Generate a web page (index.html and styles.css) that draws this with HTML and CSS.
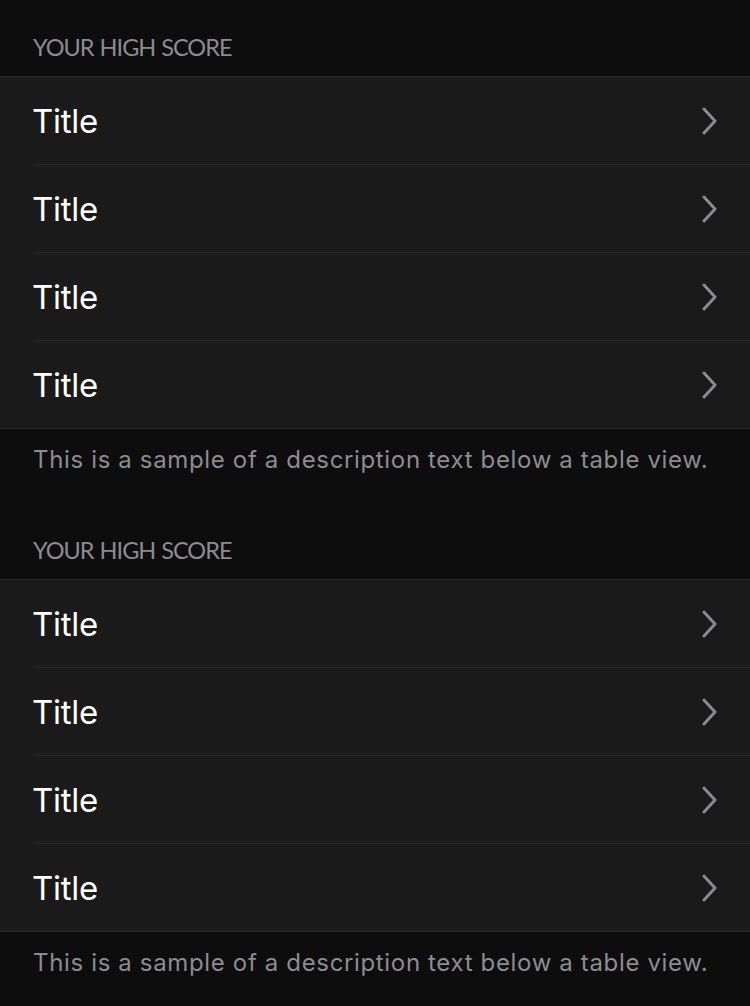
FILE: index.html
```html
<!DOCTYPE html>
<html>
<head>
<meta charset="utf-8">
<link rel="stylesheet" href="styles.css">
</head>
<body>
<div class="page">
  <section class="section">
    <div class="header"><span>YOUR HIGH SCORE</span></div>
    <div class="group">
      <div class="row"><span class="title">Title</span><svg class="chev" viewBox="0 0 16 28"><path d="M2 2 L13 14 L2 26"/></svg></div>
      <div class="row"><span class="title">Title</span><svg class="chev" viewBox="0 0 16 28"><path d="M2 2 L13 14 L2 26"/></svg></div>
      <div class="row"><span class="title">Title</span><svg class="chev" viewBox="0 0 16 28"><path d="M2 2 L13 14 L2 26"/></svg></div>
      <div class="row"><span class="title">Title</span><svg class="chev" viewBox="0 0 16 28"><path d="M2 2 L13 14 L2 26"/></svg></div>
    </div>
    <div class="footer">This is a sample of a description text below a table view.</div>
  </section>
  <section class="section">
    <div class="header"><span>YOUR HIGH SCORE</span></div>
    <div class="group">
      <div class="row"><span class="title">Title</span><svg class="chev" viewBox="0 0 16 28"><path d="M2 2 L13 14 L2 26"/></svg></div>
      <div class="row"><span class="title">Title</span><svg class="chev" viewBox="0 0 16 28"><path d="M2 2 L13 14 L2 26"/></svg></div>
      <div class="row"><span class="title">Title</span><svg class="chev" viewBox="0 0 16 28"><path d="M2 2 L13 14 L2 26"/></svg></div>
      <div class="row"><span class="title">Title</span><svg class="chev" viewBox="0 0 16 28"><path d="M2 2 L13 14 L2 26"/></svg></div>
    </div>
    <div class="footer">This is a sample of a description text below a table view.</div>
  </section>
</div>
</body>
</html>
```

FILE: styles.css
```css
html, body {
  margin: 0;
  padding: 0;
  background: #0d0d0d;
}
.page {
  width: 750px;
  height: 1006px;
  overflow: hidden;
  background: #0d0d0d;
}
.header {
  height: 76px;
  box-sizing: border-box;
  display: flex;
  align-items: flex-end;
  padding: 0 0 17px 33px;
  font-family: "Lato", "Open Sans", sans-serif;
  font-size: 23.5px;
  line-height: 24px;
  color: #8b8b90;
  letter-spacing: -1px;
  word-spacing: 1px;
}
.group {
  background: #1a1a1a;
  border-top: 1px solid #2a2a2b;
  border-bottom: 1px solid #2a2a2b;
}
.row {
  height: 87px;
  margin-left: 33px;
  padding-right: 32px;
  display: flex;
  align-items: center;
  justify-content: space-between;
  border-bottom: 1px solid #2a2a2b;
}
.row:last-child {
  border-bottom: none;
}
.title {
  font-family: "Inter", "Liberation Sans", sans-serif;
  font-size: 33px;
  color: #ffffff;
  letter-spacing: -0.3px;
  margin-left: -1px;
}
.chev {
  width: 16px;
  height: 28px;
  fill: none;
  stroke: #8a8a8e;
  stroke-width: 3;
  stroke-linecap: round;
  stroke-linejoin: round;
}
.footer {
  height: 74px;
  box-sizing: border-box;
  padding: 17px 0 0 33px;
  font-family: "Inter", "Liberation Sans", sans-serif;
  font-size: 24px;
  line-height: 28px;
  color: #8c8c91;
  letter-spacing: 0.65px;
}
```
